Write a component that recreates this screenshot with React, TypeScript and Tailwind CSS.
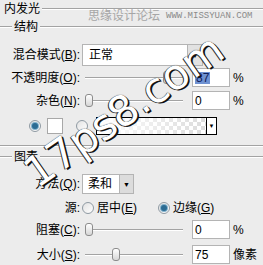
import React from 'react';

function Line({ className = '' }: { className?: string }) {
  return <div className={`h-[2px] border-t border-b border-t-[#a3a3a3] border-b-white ${className}`} />;
}

function Label({ children }: { children: React.ReactNode }) {
  return <span className="w-[80px] shrink-0 text-right whitespace-nowrap">{children}</span>;
}

function Slider({ value, max }: { value: number; max: number }) {
  const left = Math.round((value / max) * 90);
  return (
    <div className="relative w-[98px] h-[16px] ml-[5px] flex items-center">
      <Line className="w-full" />
      <div
        className="absolute top-[1px] w-[8px] h-[13px] rounded-[3px] border border-[#8c8c8c] bg-gradient-to-b from-white to-[#d6d6d6]"
        style={{ left }}
      />
    </div>
  );
}

function NumBox({ children }: { children: React.ReactNode }) {
  return (
    <div className="w-[38px] h-[19px] ml-[9px] bg-white border border-[#b4b4b4] flex items-center pl-[2px]">
      {children}
    </div>
  );
}

function Radio({ on }: { on?: boolean }) {
  return (
    <div className="w-[12px] h-[12px] rounded-full border border-[#8f9aa3] bg-gradient-to-br from-[#e2e2e2] to-white flex items-center justify-center shrink-0">
      {on && <div className="w-[6px] h-[6px] rounded-full bg-[#2b6b93] shadow-[0_0_0_1px_#7fb0cc]" />}
    </div>
  );
}

export default function App() {
  return (
    <div className="relative w-[263px] h-[265px] overflow-hidden bg-[#ececec] text-[12px] leading-none text-black font-['Liberation_Sans','Noto_Sans_CJK_SC',sans-serif]">
      {/* 内发光 */}
      <div className="flex items-center h-[18px] pl-[4px]">
        <span>内发光</span>
        <Line className="flex-1 ml-[2px]" />
      </div>

      {/* 结构 */}
      <div className="flex items-center h-[18px]">
        <Line className="w-[12px]" />
        <span className="mx-[2px]">结构</span>
        <Line className="flex-1" />
      </div>

      {/* 混合模式 */}
      <div className="flex items-center h-[22px] mt-[8px]">
        <Label>混合模式(<u>B</u>):</Label>
        <div className="ml-[2px] w-[106px] h-[22px] bg-white border border-[#b4b4b4] flex items-center pl-[6px]">正常</div>
        <div className="w-[15px] h-[22px] border border-l-0 border-[#b4b4b4] bg-[#e2e2e2] flex items-center justify-center text-[7px]">▼</div>
      </div>

      {/* 不透明度 */}
      <div className="flex items-center h-[21px] mt-[1px]">
        <Label>不透明度(<u>O</u>):</Label>
        <Slider value={87} max={100} />
        <NumBox>
          <span className="bg-[#6f92d2] text-[#10205a] px-[1px]">87</span>
        </NumBox>
        <span className="ml-[3px]">%</span>
      </div>

      {/* 杂色 */}
      <div className="flex items-center h-[21px] mt-[2px]">
        <Label>杂色(<u>N</u>):</Label>
        <Slider value={0} max={100} />
        <NumBox>0</NumBox>
        <span className="ml-[3px]">%</span>
      </div>

      {/* color / gradient */}
      <div className="flex items-center h-[20px] mt-[5px] pl-[29px]">
        <Radio on />
        <div className="ml-[6px] w-[16px] h-[16px] bg-white border border-[#a8a8a8]" />
        <div className="ml-[13px]">
          <Radio />
        </div>
        <div className="ml-[8px] w-[121px] h-[18px] border border-black flex">
          <svg width="109" height="16" className="block">
            <defs>
              <pattern id="chk" width="8" height="8" patternUnits="userSpaceOnUse">
                <rect width="8" height="8" fill="#ffffff" />
                <rect width="4" height="4" fill="#dcdcdc" />
                <rect x="4" y="4" width="4" height="4" fill="#dcdcdc" />
              </pattern>
              <linearGradient id="fade" x1="0" x2="1" y1="0" y2="0">
                <stop offset="0" stopColor="#ffffff" stopOpacity="1" />
                <stop offset="1" stopColor="#ffffff" stopOpacity="0" />
              </linearGradient>
            </defs>
            <rect width="109" height="16" fill="url(#chk)" />
            <rect width="109" height="16" fill="url(#fade)" />
          </svg>
          <div className="w-[10px] border-l border-black bg-white flex items-center justify-center text-[6px]">▼</div>
        </div>
      </div>

      <Line className="mt-[9px]" />

      {/* 图素 */}
      <div className="flex items-center h-[14px] mt-[3px]">
        <Line className="w-[12px]" />
        <span className="mx-[2px]">图素</span>
        <Line className="flex-1" />
      </div>

      {/* 方法 */}
      <div className="flex items-center h-[20px] mt-[10px]">
        <Label>方法(<u>Q</u>):</Label>
        <div className="ml-[2px] w-[38px] h-[20px] bg-white border border-[#b4b4b4] flex items-center pl-[5px]">柔和</div>
        <div className="w-[14px] h-[20px] border border-l-0 border-[#b4b4b4] bg-[#dcdcdc] flex items-center justify-center text-[7px]">▼</div>
      </div>

      {/* 源 */}
      <div className="flex items-center h-[20px] mt-[4px]">
        <Label>源:</Label>
        <div className="ml-[2px] w-[76px] flex items-center">
          <Radio />
          <span className="ml-[3px]">居中(<u>E</u>)</span>
        </div>
        <Radio on />
        <span className="ml-[3px]">边缘(<u>G</u>)</span>
      </div>

      {/* 阻塞 */}
      <div className="flex items-center h-[19px] mt-[2px]">
        <Label>阻塞(<u>C</u>):</Label>
        <Slider value={0} max={100} />
        <NumBox>0</NumBox>
        <span className="ml-[3px]">%</span>
      </div>

      {/* 大小 */}
      <div className="flex items-center h-[19px] mt-[6px]">
        <Label>大小(<u>S</u>):</Label>
        <Slider value={75} max={250} />
        <NumBox>75</NumBox>
        <span className="ml-[3px]">像素</span>
      </div>

      {/* site watermark */}
      <div className="absolute left-[88px] top-[10px] flex items-center text-[#a6a6a6]">
        <span>思缘设计论坛</span>
        <span className="ml-[6px] text-[9px] font-['Liberation_Mono',monospace] text-[#8a8a8a]">WWW.MISSYUAN.COM</span>
      </div>

      {/* big watermark */}
      <span className="absolute left-[124px] top-[111px] -translate-x-1/2 -translate-y-1/2 -rotate-[35deg] whitespace-nowrap text-[42px] leading-none text-white font-['DejaVu_Sans',sans-serif] [text-shadow:1px_2px_0_#111,-1px_0_0_#333,0_0_1px_#000]">
        17ps8.com
      </span>
    </div>
  );
}
